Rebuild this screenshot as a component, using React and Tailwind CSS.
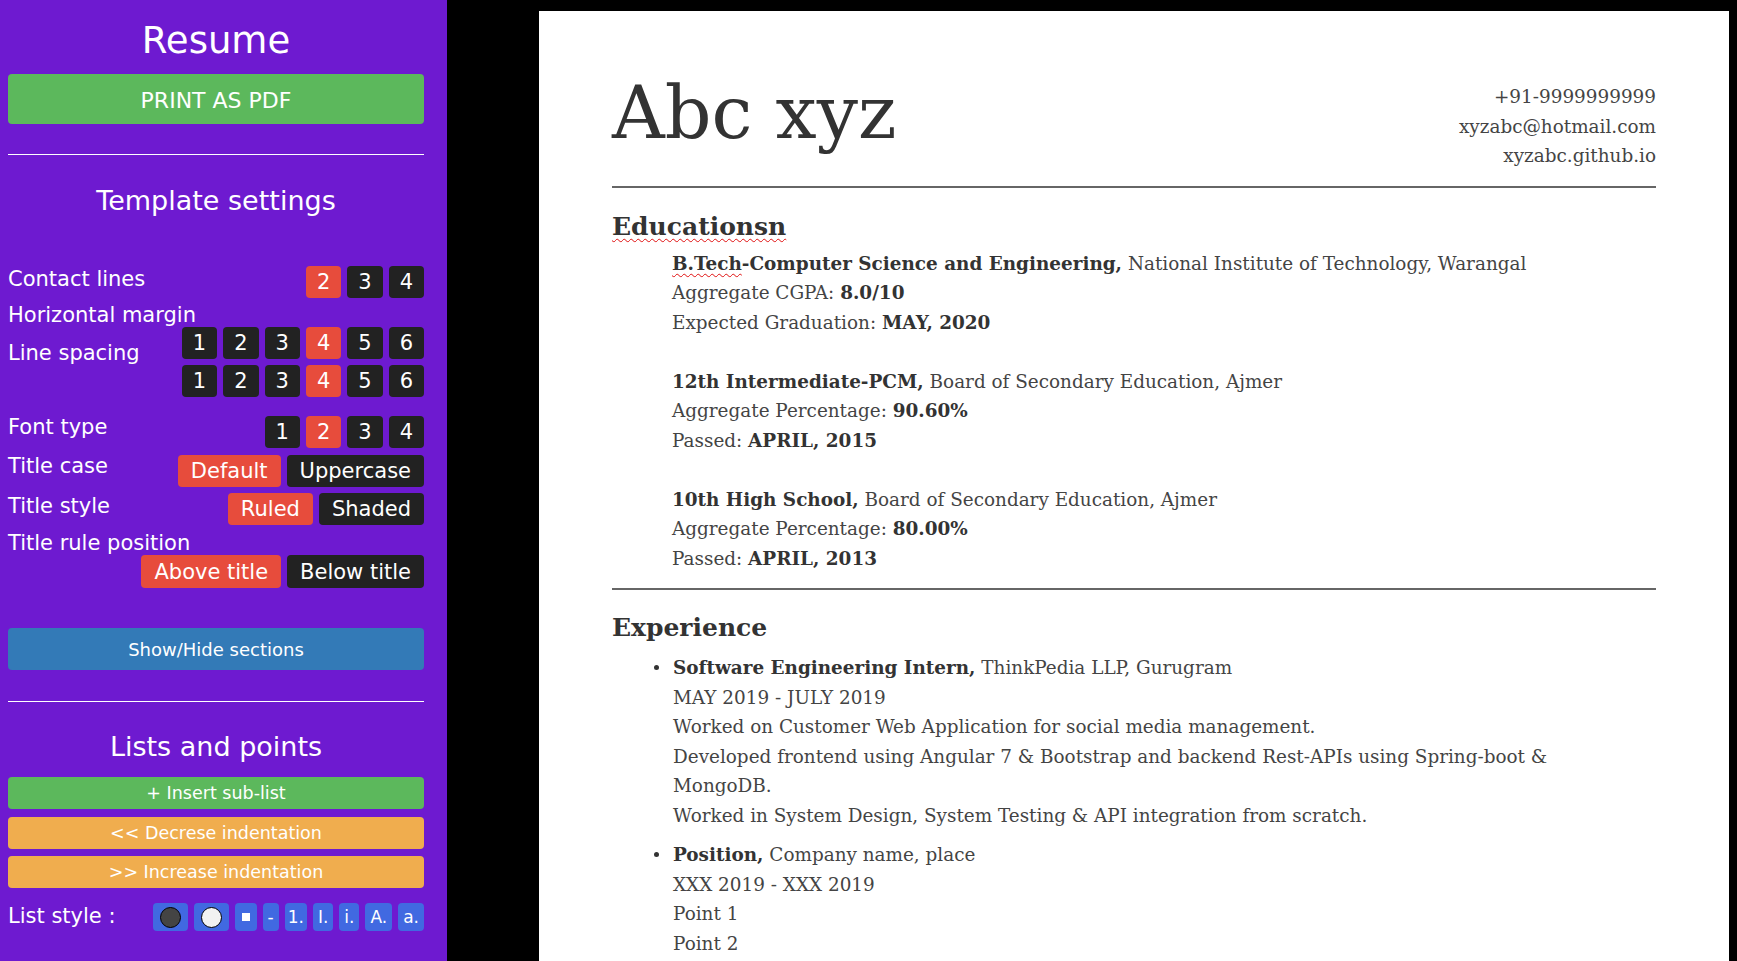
import React from "react";

const sans = "font-['DejaVu_Sans',sans-serif]";
const serif = "font-['DejaVu_Serif',serif]";

function OptionButton({ label, active, tall }) {
  const short = label.length === 1;
  return (
    <button
      className={`rounded-[4px] text-[21px] leading-[26px] text-white ${
        short ? "px-[11px]" : "px-[13px]"
      } ${tall ? "h-[33px]" : "h-[32px]"} ${active ? "bg-[#e74c3c]" : "bg-[#222222]"}`}
    >
      {label}
    </button>
  );
}

function OptionGroup({ options, active, tall }) {
  return (
    <div className="flex gap-[6px]">
      {options.map((o) => (
        <OptionButton key={o} label={o} active={o === active} tall={tall} />
      ))}
    </div>
  );
}

function Label({ children, className = "" }) {
  return <span className={`text-[21px] leading-[26px] ${className}`}>{children}</span>;
}

function ListStyleButtons() {
  const textStyles = ["-", "1.", "I.", "i.", "A.", "a."];
  return (
    <div className="flex gap-[6px]">
      <button className="flex h-[28px] items-center rounded-[4px] bg-[#4169e1] px-[7px]">
        <span className="h-[21px] w-[21px] rounded-full border-[1.5px] border-black bg-[#444444]" />
      </button>
      <button className="flex h-[28px] items-center rounded-[4px] bg-[#4169e1] px-[7px]">
        <span className="h-[21px] w-[21px] rounded-full border-[1.5px] border-black bg-[#f2f2f2]" />
      </button>
      <button className="flex h-[28px] items-center rounded-[4px] bg-[#4169e1] px-[7px]">
        <span className="h-[8px] w-[8px] bg-white" />
      </button>
      {textStyles.map((s) => (
        <button
          key={s}
          className={`h-[28px] rounded-[4px] bg-[#4169e1] text-[17px] leading-[28px] text-white ${
            s === "1." ? "px-[3px]" : "px-[5px]"
          }`}
        >
          {s}
        </button>
      ))}
    </div>
  );
}

function Sidebar() {
  const sixes = ["1", "2", "3", "4", "5", "6"];
  return (
    <aside className={`w-[447px] shrink-0 bg-[#6e1ad0] pl-2 pr-[23px] text-white ${sans}`}>
      <h1 className="mt-[22px] text-center text-[37px] leading-none">Resume</h1>
      <button className="mt-[15px] block h-[50px] w-full rounded-[4px] bg-[#5cb85c] pt-[2px] text-[22px] uppercase">
        Print as PDF
      </button>
      <hr className="mt-[30px] border-white" />
      <h2 className="mt-[32px] text-center text-[27px] leading-none">Template settings</h2>

      <div className="mt-[52px] flex items-start justify-between">
        <Label>Contact lines</Label>
        <OptionGroup options={["2", "3", "4"]} active="2" />
      </div>

      <div className="mt-[6px] text-[21px] leading-[23px]">Horizontal margin</div>
      <div className="flex items-start justify-between">
        <Label className="mt-[13px]">Line spacing</Label>
        <div className="flex flex-col items-end gap-[6px]">
          <OptionGroup options={sixes} active="4" />
          <OptionGroup options={sixes} active="4" />
        </div>
      </div>

      <div className="mt-[19px] flex items-start justify-between">
        <Label className="-mt-[2px]">Font type</Label>
        <OptionGroup options={["1", "2", "3", "4"]} active="2" />
      </div>

      <div className="mt-[7px] flex items-start justify-between">
        <Label className="-mt-[2px]">Title case</Label>
        <OptionGroup options={["Default", "Uppercase"]} active="Default" />
      </div>

      <div className="mt-[6px] flex items-start justify-between">
        <Label>Title style</Label>
        <OptionGroup options={["Ruled", "Shaded"]} active="Ruled" />
      </div>

      <div className="mt-[7px] text-[21px] leading-[23px]">Title rule position</div>
      <div className="flex justify-end">
        <OptionGroup options={["Above title", "Below title"]} active="Above title" tall />
      </div>

      <button className="mt-[40px] block h-[42px] w-full rounded-[4px] bg-[#337ab7] text-[18px]">
        Show/Hide sections
      </button>
      <hr className="mt-[31px] border-white" />

      <h2 className="mt-[31px] text-center text-[27px] leading-none">Lists and points</h2>
      <button className="mt-[17px] block h-[32px] w-full rounded-[4px] bg-[#5cb85c] text-[17.5px]">
        + Insert sub-list
      </button>
      <button className="mt-[8px] block h-[32px] w-full rounded-[4px] bg-[#f0ad4e] text-[17.5px]">
        &lt;&lt; Decrese indentation
      </button>
      <button className="mt-[7px] block h-[32px] w-full rounded-[4px] bg-[#f0ad4e] text-[17.5px]">
        &gt;&gt; Increase indentation
      </button>

      <div className="mt-[15px] flex items-start justify-between">
        <Label>List style :</Label>
        <ListStyleButtons />
      </div>
    </aside>
  );
}

const squiggle =
  "underline decoration-wavy decoration-[#e01010] decoration-1 underline-offset-[3px]";

function EduItem({ title, place, lines, first }) {
  return (
    <div className={first ? "" : "mt-[29.5px]"}>
      <p>
        <b className="text-[#333]">{title},</b> {place}
      </p>
      {lines.map(([k, v]) => (
        <p key={k}>
          {k}: <b className="text-[#333]">{v}</b>
        </p>
      ))}
    </div>
  );
}

function Bullet({ children, className = "" }) {
  return (
    <li className={`flex ${className}`}>
      <span className="w-[19px] shrink-0">
        <span className="mt-[12px] block h-[5px] w-[5px] rounded-full bg-[#333]" />
      </span>
      <div>{children}</div>
    </li>
  );
}

function Paper() {
  return (
    <main
      className={`ml-[92px] mt-[11px] w-[1190px] shrink-0 self-start bg-white px-[73px] pb-[120px] pt-[62px] text-[18.4px] leading-[29.5px] text-[#444] ${serif}`}
    >
      <header className="flex items-start justify-between">
        <h1 className="mt-[3px] text-[73px] leading-none text-[#333]">Abc xyz</h1>
        <div className="mt-[9px] text-right">
          <p>+91-9999999999</p>
          <p>xyzabc@hotmail.com</p>
          <p>xyzabc.github.io</p>
        </div>
      </header>
      <div className="mt-[15px] border-t-2 border-[#666]" />

      <h2 className="mt-[23px] text-[25px] font-bold leading-[31px] text-[#333]">
        <span className={squiggle}>Educationsn</span>
      </h2>
      <div className="mt-[7px] pl-[60px]">
        <EduItem
          first
          title={
            <>
              <span className={squiggle}>B.Tech</span>-Computer Science and Engineering
            </>
          }
          place="National Institute of Technology, Warangal"
          lines={[
            ["Aggregate CGPA", "8.0/10"],
            ["Expected Graduation", "MAY, 2020"],
          ]}
        />
        <EduItem
          title="12th Intermediate-PCM"
          place="Board of Secondary Education, Ajmer"
          lines={[
            ["Aggregate Percentage", "90.60%"],
            ["Passed", "APRIL, 2015"],
          ]}
        />
        <EduItem
          title="10th High School"
          place="Board of Secondary Education, Ajmer"
          lines={[
            ["Aggregate Percentage", "80.00%"],
            ["Passed", "APRIL, 2013"],
          ]}
        />
      </div>
      <div className="mt-[15px] border-t-2 border-[#666]" />

      <h2 className="mt-[22px] text-[25px] font-bold leading-[31px] text-[#333]">Experience</h2>
      <ul className="mt-[10px] pl-[42px]">
        <Bullet>
          <p>
            <b className="text-[#333]">Software Engineering Intern,</b> ThinkPedia LLP, Gurugram
          </p>
          <p>MAY 2019 - JULY 2019</p>
          <p>Worked on Customer Web Application for social media management.</p>
          <p>
            Developed frontend using Angular 7 &amp; Bootstrap and backend Rest-APIs using
            Spring-boot &amp;
            <br />
            MongoDB.
          </p>
          <p>Worked in System Design, System Testing &amp; API integration from scratch.</p>
        </Bullet>
        <Bullet className="mt-[10px]">
          <p>
            <b className="text-[#333]">Position,</b> Company name, place
          </p>
          <p>XXX 2019 - XXX 2019</p>
          <p>Point 1</p>
          <p>Point 2</p>
        </Bullet>
      </ul>
    </main>
  );
}

export default function App() {
  return (
    <div className="flex h-screen w-full overflow-hidden bg-black">
      <Sidebar />
      <Paper />
    </div>
  );
}
